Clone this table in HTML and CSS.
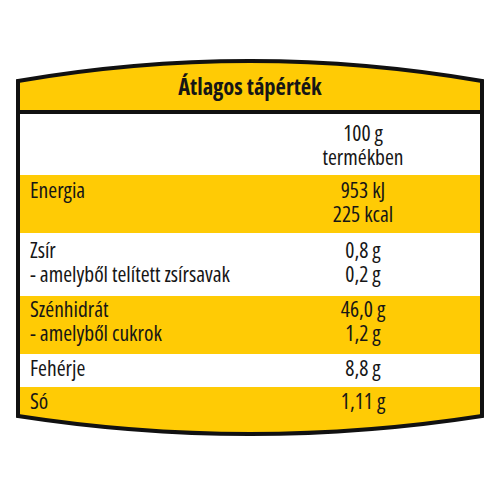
FILE: index.html
```html
<!DOCTYPE html>
<html>
	<head>
		<meta charset="utf-8">
		<title>Átlagos tápérték</title>
		<link rel="stylesheet" href="styles.css">
	</head>
	<body>
		<div class="label">
			<div class="rows">
				<div class="head">Átlagos tápérték</div>
				<div class="row white r-per">
					<div class="name"></div>
					<div class="val">100 g<br>termékben</div>
				</div>
				<div class="row yellow r-energy">
					<div class="name">Energia</div>
					<div class="val">953 kJ<br>225 kcal</div>
				</div>
				<div class="row white r-fat">
					<div class="name">Zsír<br>- amelyből telített zsírsavak</div>
					<div class="val">0,8 g<br>0,2 g</div>
				</div>
				<div class="row yellow r-carb">
					<div class="name">Szénhidrát<br>- amelyből cukrok</div>
					<div class="val">46,0 g<br>1,2 g</div>
				</div>
				<div class="row white r-prot">
					<div class="name">Fehérje</div>
					<div class="val">8,8 g</div>
				</div>
				<div class="row yellow r-salt">
					<div class="name">Só</div>
					<div class="val">1,11 g</div>
				</div>
			</div>
			<!-- keret ív a tetején és alján -->
			<svg class="frame" width="468" height="377" viewBox="0 0 468 377">
				<path d="M2,22 Q234,-18 466,22 L466,357 Q234,393 2,357 Z" fill="none" stroke="#111" stroke-width="4" stroke-linejoin="miter"/>
			</svg>
		</div>
	</body>
</html>
```

FILE: styles.css
```css
* {
	margin: 0;
	padding: 0;
	box-sizing: border-box;
}
body {
	background: #fff;
	font-family: "Open Sans", "Liberation Sans", sans-serif;
	font-stretch: 75%;
	color: #161616;
}
.label {
	position: relative;
	width: 468px;
	height: 377px;
	margin: 59px 0 0 16px;
}
.rows {
	height: 100%;
	display: flex;
	flex-direction: column;
	clip-path: path('M2,22 Q234,-18 466,22 L466,357 Q234,393 2,357 Z');
}
.frame {
	position: absolute;
	left: 0;
	top: 0;
}
.head {
	height: 55px;
	flex: none;
	background: #ffcb05;
	border-bottom: 4px solid #111;
	padding-top: 16px;
	text-align: center;
	font-weight: bold;
	font-size: 22.5px;
	line-height: 24px;
}
.row {
	flex: none;
	display: grid;
	grid-template-columns: 226px 1fr;
	padding: 0 4px;
	font-size: 21.5px;
	line-height: 24px;
	white-space: nowrap;
}
.row .name {
	padding-left: 10px;
}
.row .val {
	text-align: center;
}
.white {
	background: #fff;
}
.yellow {
	background: #ffcb05;
}
.r-per {
	height: 61px;
	padding-top: 7px;
}
.r-energy {
	height: 58px;
	padding-top: 3px;
}
.r-fat {
	height: 63px;
	padding-top: 5px;
}
.r-carb {
	height: 58px;
	padding-top: 1px;
}
.r-prot {
	height: 33px;
	padding-top: 2px;
}
.r-salt {
	flex: 1;
	padding-top: 2px;
}
```
